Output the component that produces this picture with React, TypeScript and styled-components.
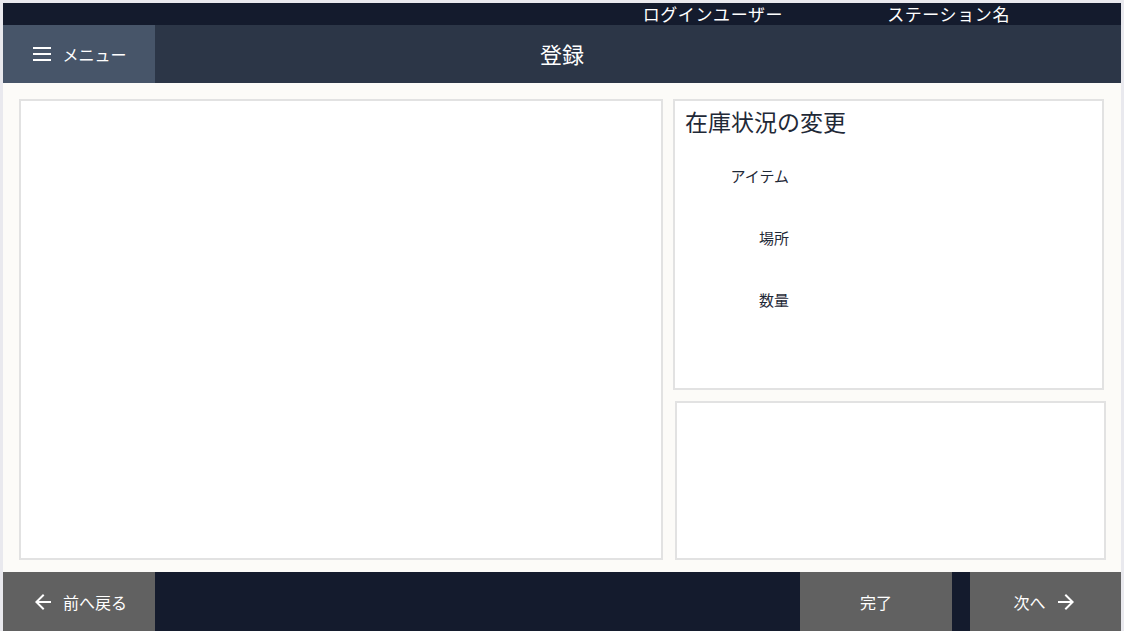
import styled, { createGlobalStyle } from "styled-components"

const GlobalStyle = createGlobalStyle`
  * {
    box-sizing: border-box;
  }
  html, body {
    margin: 0;
    height: 100%;
  }
  body {
    background: #e9e9ee;
    padding: 3px 3px 0 3px;
    font-family: "Noto Sans CJK JP", "Noto Sans", sans-serif;
    overflow: hidden;
  }
  #root {
    height: 100%;
  }
`

const MenuIcon = () => (
    <svg width="18" height="14" viewBox="0 0 18 14">
        <rect x="0" y="0" width="18" height="2" fill="#fff" />
        <rect x="0" y="6" width="18" height="2" fill="#fff" />
        <rect x="0" y="12" width="18" height="2" fill="#fff" />
    </svg>
)

const ArrowBack = () => (
    <svg width="24" height="24" viewBox="0 0 24 24">
        <path fill="#fff" d="M20 11H7.83l5.59-5.59L12 4l-8 8 8 8 1.41-1.41L7.83 13H20v-2z" />
    </svg>
)

const ArrowForward = () => (
    <svg width="24" height="24" viewBox="0 0 24 24">
        <path fill="#fff" d="M12 4l-1.41 1.41L16.17 11H4v2h12.17l-5.58 5.59L12 20l8-8z" />
    </svg>
)

const fields = ["アイテム", "場所", "数量"]

const App = () => {
    return (
        <>
            <GlobalStyle />
            <Page>
                <StatusBar>
                    <StatusItem>ログインユーザー</StatusItem>
                    <StatusItem>ステーション名</StatusItem>
                </StatusBar>
                <Header>
                    <MenuButton>
                        <MenuIcon />
                        メニュー
                    </MenuButton>
                    <HeaderTitle>登録</HeaderTitle>
                </Header>
                <Main>
                    <Panel />
                    <SideColumn>
                        <FormPanel>
                            <FormTitle>在庫状況の変更</FormTitle>
                            {fields.map((f) => (
                                <FieldRow key={f}>
                                    <FieldLabel>{f}</FieldLabel>
                                </FieldRow>
                            ))}
                        </FormPanel>
                        <SubPanel />
                    </SideColumn>
                </Main>
                <Footer>
                    <FooterButton>
                        <ArrowBack />
                        前へ戻る
                    </FooterButton>
                    <Spacer />
                    <FooterButton>完了</FooterButton>
                    <FooterButton $width={151}>
                        次へ
                        <ArrowForward />
                    </FooterButton>
                </Footer>
            </Page>
        </>
    )
}

export default App

const Page = styled.div`
    height: 100%;
    display: flex;
    flex-direction: column;
    background: #fcfbf8;
`

const StatusBar = styled.div`
    height: 22px;
    background-color: #141b2d;
    display: flex;
    justify-content: flex-end;
    align-items: center;
    gap: 104px;
    padding-right: 111px;
`

const StatusItem = styled.span`
    color: #fff;
    font-size: 17px;
    line-height: 22px;
    letter-spacing: 0.6px;
`

const Header = styled.div`
    height: 58px;
    background-color: #2c3647;
    display: grid;
    grid-template-columns: 152px 1fr 152px;
    align-items: stretch;
`

const MenuButton = styled.div`
    background-color: #475569;
    color: #fff;
    display: flex;
    align-items: center;
    justify-content: center;
    gap: 11px;
    font-size: 16px;
    padding-left: 2px;
`

const HeaderTitle = styled.h1`
    margin: 0;
    color: #fff;
    font-size: 22px;
    font-weight: 400;
    display: flex;
    align-items: center;
    justify-content: center;
    padding-bottom: 2px;
`

const Main = styled.main`
    flex: 1;
    display: flex;
    gap: 10px;
    padding: 16px 17px 12px 16px;
`

const Panel = styled.div`
    width: 644px;
    background: #fff;
    border: 2px solid #e2e2e2;
`

const SideColumn = styled.div`
    flex: 1;
    display: flex;
    flex-direction: column;
    gap: 11px;
`

const FormPanel = styled.section`
    height: 291px;
    background: #fff;
    border: 2px solid #e2e2e2;
    padding: 5px 10px;
`

const FormTitle = styled.h2`
    margin: 0 0 29px;
    font-size: 23px;
    font-weight: 400;
    color: #1f2937;
    line-height: 30px;
`

const FieldRow = styled.div`
    height: 62px;
    display: flex;
`

const FieldLabel = styled.label`
    width: 104px;
    text-align: right;
    font-size: 15px;
    color: #1f2937;
`

const SubPanel = styled.div`
    flex: 1;
    margin-left: 2px;
    margin-right: -2px;
    background: #fff;
    border: 2px solid #e2e2e2;
`

const Footer = styled.footer`
    height: 59px;
    background-color: #141b2d;
    display: flex;
    gap: 18px;
`

const Spacer = styled.div`
    flex: 1;
`

const FooterButton = styled.button<{ $width?: number }>`
    width: ${(p) => p.$width ?? 152}px;
    border: none;
    border-radius: 0;
    background-color: #616161;
    color: #fff;
    font-family: inherit;
    font-size: 16px;
    display: flex;
    align-items: center;
    justify-content: center;
    gap: 8px;
    padding: 0;
`
